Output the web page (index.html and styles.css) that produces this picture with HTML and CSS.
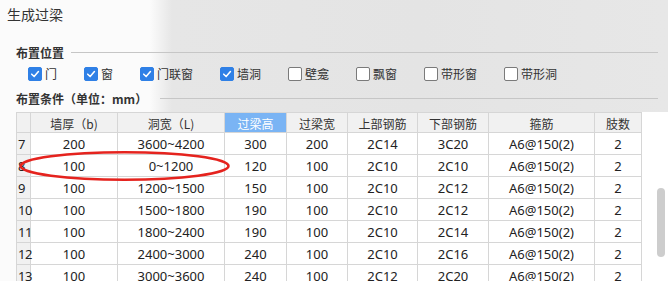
FILE: index.html
```html
<!DOCTYPE html>
<html lang="zh">
<head>
<meta charset="utf-8">
<title>生成过梁</title>
<link rel="stylesheet" href="styles.css">
</head>
<body>
<div class="page">
  <div class="title">生成过梁</div>

  <div class="section-head"><span>布置位置</span><i class="rule"></i></div>
  <div class="checks">
    <label class="chk"><span class="box on"><svg viewBox="0 0 14 14"><path d="M3.2 7.2 L6 10 L11 4.2"/></svg></span>门</label>
    <label class="chk"><span class="box on"><svg viewBox="0 0 14 14"><path d="M3.2 7.2 L6 10 L11 4.2"/></svg></span>窗</label>
    <label class="chk"><span class="box on"><svg viewBox="0 0 14 14"><path d="M3.2 7.2 L6 10 L11 4.2"/></svg></span>门联窗</label>
    <label class="chk"><span class="box on"><svg viewBox="0 0 14 14"><path d="M3.2 7.2 L6 10 L11 4.2"/></svg></span>墙洞</label>
    <label class="chk"><span class="box"></span>壁龛</label>
    <label class="chk"><span class="box"></span>飘窗</label>
    <label class="chk"><span class="box"></span>带形窗</label>
    <label class="chk"><span class="box"></span>带形洞</label>
  </div>

  <div class="section-head second"><span>布置条件（单位：mm）</span><i class="rule"></i></div>

  <div class="panel">
    <div class="grid">
      <div class="row head">
        <div class="c num"></div>
        <div class="c">墙厚（b)</div>
        <div class="c">洞宽（L)</div>
        <div class="c sel">过梁高</div>
        <div class="c">过梁宽</div>
        <div class="c">上部钢筋</div>
        <div class="c">下部钢筋</div>
        <div class="c">箍筋</div>
        <div class="c">肢数</div>
      </div>
      <div class="row"><div class="c num">7</div><div class="c">200</div><div class="c">3600~4200</div><div class="c">300</div><div class="c">200</div><div class="c">2C14</div><div class="c">3C20</div><div class="c">A6@150(2)</div><div class="c">2</div></div>
      <div class="row"><div class="c num">8</div><div class="c">100</div><div class="c">0~1200</div><div class="c">120</div><div class="c">100</div><div class="c">2C10</div><div class="c">2C10</div><div class="c">A6@150(2)</div><div class="c">2</div></div>
      <div class="row"><div class="c num">9</div><div class="c">100</div><div class="c">1200~1500</div><div class="c">150</div><div class="c">100</div><div class="c">2C10</div><div class="c">2C12</div><div class="c">A6@150(2)</div><div class="c">2</div></div>
      <div class="row"><div class="c num">10</div><div class="c">100</div><div class="c">1500~1800</div><div class="c">190</div><div class="c">100</div><div class="c">2C10</div><div class="c">2C12</div><div class="c">A6@150(2)</div><div class="c">2</div></div>
      <div class="row"><div class="c num">11</div><div class="c">100</div><div class="c">1800~2400</div><div class="c">190</div><div class="c">100</div><div class="c">2C10</div><div class="c">2C14</div><div class="c">A6@150(2)</div><div class="c">2</div></div>
      <div class="row"><div class="c num">12</div><div class="c">100</div><div class="c">2400~3000</div><div class="c">240</div><div class="c">100</div><div class="c">2C10</div><div class="c">2C16</div><div class="c">A6@150(2)</div><div class="c">2</div></div>
      <div class="row"><div class="c num">13</div><div class="c">100</div><div class="c">3000~3600</div><div class="c">240</div><div class="c">100</div><div class="c">2C12</div><div class="c">2C20</div><div class="c">A6@150(2)</div><div class="c">2</div></div>
    </div>
    <div class="track"><div class="thumb"></div></div>
    <svg class="mark" width="240" height="40" viewBox="0 0 240 40"><ellipse cx="108.5" cy="20" rx="104" ry="13.8"/></svg>
  </div>
</div>
</body>
</html>
```

FILE: styles.css
```css
html, body {
  margin: 0;
  padding: 0;
}
body {
  width: 668px;
  height: 281px;
  overflow: hidden;
  font-family: "Noto Sans", "Noto Sans CJK SC", sans-serif;
  color: #222;
  background: linear-gradient(to right, #fbfbfb 0, #fbfbfb 150px, #e6e6e6 172px, #e4e4e4 420px, #e7e7e7 100%);
}
.page {
  display: flex;
  flex-direction: column;
  height: 281px;
}
.title {
  height: 28px;
  line-height: 28px;
  padding-left: 7px;
  font-family: "Noto Sans CJK SC", sans-serif;
  font-size: 14px;
  color: #333;
}
.section-head {
  display: flex;
  align-items: center;
  height: 16px;
  margin-top: 16px;
  padding: 0 10px 0 16px;
  font-family: "Noto Sans CJK SC", sans-serif;
  font-size: 12px;
  font-weight: bold;
  color: #333;
}
.section-head.second {
  margin-top: 8px;
}
.section-head .rule {
  flex: 1;
  height: 1px;
  margin-left: 7px;
  background: #c6c6c6;
}
.section-head.second .rule {
  margin-left: 13px;
}
.checks {
  display: flex;
  align-items: center;
  height: 16px;
  margin-top: 6px;
  padding-left: 28px;
  gap: 27px;
  font-family: "Noto Sans CJK SC", sans-serif;
  font-size: 12px;
  color: #333;
}
.chk {
  display: flex;
  align-items: center;
  gap: 3px;
  line-height: 16px;
}
.box {
  width: 14px;
  height: 14px;
  box-sizing: border-box;
  border: 1px solid #7a7a7a;
  border-radius: 2px;
  background: #fff;
  display: flex;
}
.box.on {
  border-color: #2f80e6;
  background: #2f80e6;
}
.box svg {
  width: 12px;
  height: 12px;
}
.box svg path {
  fill: none;
  stroke: #fff;
  stroke-width: 1.8;
  stroke-linecap: round;
  stroke-linejoin: round;
}
.panel {
  position: relative;
  display: flex;
  margin: 6px 0 0 16px;
  flex: 1;
  background: #fff;
  overflow: hidden;
}
.grid {
  border-left: 1px solid #d6d6d6;
  border-top: 1px solid #d6d6d6;
  align-self: flex-start;
}
.row {
  display: grid;
  grid-template-columns: 14px 87px 107px 62px 61px 70px 71px 106px 47px;
  height: 22px;
}
.row.head {
  height: 20px;
  background: #f1f1f1;
  font-family: "Noto Sans CJK SC", sans-serif;
  font-size: 12px;
  color: #333;
}
.c {
  box-sizing: border-box;
  border-right: 1px solid #d6d6d6;
  border-bottom: 1px solid #d6d6d6;
  display: flex;
  align-items: center;
  justify-content: center;
  font-size: 13px;
  white-space: nowrap;
  overflow: hidden;
}
.row.head .c {
  font-size: 12px;
  padding-top: 1px;
}
.c.sel {
  background: #7ab4f4;
  color: #fff;
}
.c.num {
  background: #f1f1f1;
  justify-content: flex-start;
  padding-left: 1px;
  font-size: 13px;
  letter-spacing: -0.5px;
  overflow: visible;
}
.track {
  flex: 1;
}
.thumb {
  width: 8px;
  height: 69px;
  margin: 76px 0 0 15px;
  border-radius: 4px;
  background: #cdcdcd;
}
.mark {
  position: absolute;
  left: 0;
  top: 34px;
}
.mark ellipse {
  fill: none;
  stroke: #e5231e;
  stroke-width: 2.6;
}
```
